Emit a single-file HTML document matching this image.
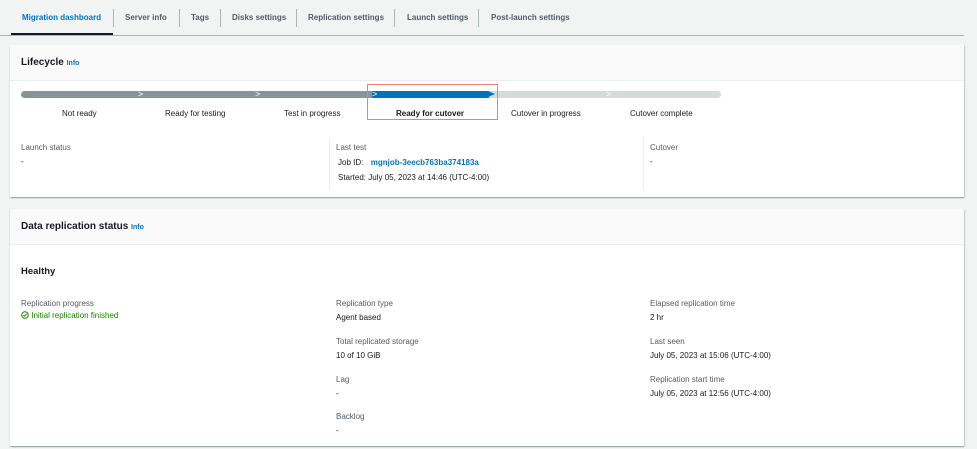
<!DOCTYPE html>
<html><head><style>
*{margin:0;padding:0;box-sizing:border-box}
body{width:977px;height:449px;background:#f2f3f3;font-family:"Liberation Sans",sans-serif;color:#16191f;position:relative;overflow:hidden;font-size:8px}
.a{position:absolute;white-space:nowrap}
.tab{position:absolute;top:13px;font-size:8px;font-weight:bold;color:#545b64}
.sep{position:absolute;top:9px;width:1px;height:18px;background:#aab7b8}
.card{position:absolute;left:10px;width:954px;background:#fff;box-shadow:0 1px 1px rgba(0,28,36,.3),1px 1px 1px rgba(0,28,36,.15)}
.hd{position:absolute;left:0;top:0;width:100%;height:36px;background:#fafafa;border-bottom:1px solid #eaeded}
.h{font-size:10px;font-weight:bold}
.info{font-size:7px;font-weight:bold;color:#0073bb}
.lbl{color:#545b64;font-size:8px}
.val{font-size:8px;color:#16191f}
.seg{position:absolute;top:91px;height:7px}
.chev{position:absolute;top:89px;font-size:9px;color:#fff;line-height:10px}
</style></head><body>
<div class="tab" style="left:22px;color:#0073bb">Migration dashboard</div>
<div style="position:absolute;left:11px;top:33px;width:102px;height:2px;background:#16191f"></div>
<div class="sep" style="left:113px"></div>
<div class="tab" style="left:125px">Server info</div>
<div class="sep" style="left:179px"></div>
<div class="tab" style="left:191px">Tags</div>
<div class="sep" style="left:220px"></div>
<div class="tab" style="left:232px">Disks settings</div>
<div class="sep" style="left:296px"></div>
<div class="tab" style="left:308px">Replication settings</div>
<div class="sep" style="left:394px"></div>
<div class="tab" style="left:407px">Launch settings</div>
<div class="sep" style="left:478px"></div>
<div class="tab" style="left:491px">Post-launch settings</div>
<div style="position:absolute;left:0;top:35px;width:964px;height:1px;background:#aab7b8"></div>

<div class="card" style="top:45px;height:152px">
 <div class="hd"></div>
 <div class="a h" style="left:11px;top:12px">Lifecycle <span class="info">Info</span></div>
</div>
<div class="seg" style="left:21px;width:351px;background:#879596;border-radius:4px 0 0 4px"></div>
<div class="seg" style="left:372px;width:117px;background:#0073bb"></div>
<div class="seg" style="left:489px;width:232px;background:#d5dbdb;border-radius:0 4px 4px 0"></div>
<div class="chev" style="left:138px">&gt;</div>
<div class="chev" style="left:255px">&gt;</div>
<div class="chev" style="left:372px">&gt;</div>
<div style="position:absolute;left:488px;top:91px;width:0;height:0;border-top:3.5px solid transparent;border-bottom:3.5px solid transparent;border-left:7px solid #0073bb"></div>
<div class="chev" style="left:606px">&gt;</div>
<div style="position:absolute;left:367px;top:84px;width:131px;height:36px;border:1.5px solid #f0806c"></div>
<div class="a val" style="left:62px;top:109px">Not ready</div>
<div class="a val" style="left:165px;top:109px">Ready for testing</div>
<div class="a val" style="left:284px;top:109px">Test in progress</div>
<div class="a val" style="left:396px;top:109px;font-weight:bold">Ready for cutover</div>
<div class="a val" style="left:511px;top:109px">Cutover in progress</div>
<div class="a val" style="left:630px;top:109px">Cutover complete</div>
<div style="position:absolute;left:329px;top:137px;width:1px;height:53px;background:#eaeded"></div>
<div style="position:absolute;left:643px;top:137px;width:1px;height:53px;background:#eaeded"></div>
<div class="a lbl" style="left:21px;top:143px">Launch status</div>
<div class="a val" style="left:21px;top:157px">-</div>
<div class="a lbl" style="left:336px;top:143px">Last test</div>
<div class="a val" style="left:338px;top:158px">Job ID: &nbsp;<span style="color:#0073bb;font-weight:bold;margin-left:3px">mgnjob-3eecb763ba374183a</span></div>
<div class="a val" style="left:338px;top:173px">Started: July 05, 2023 at 14:46 (UTC-4:00)</div>
<div class="a lbl" style="left:650px;top:143px">Cutover</div>
<div class="a val" style="left:650px;top:157px">-</div>

<div class="card" style="top:209px;height:237px">
 <div class="hd"></div>
 <div class="a h" style="left:11px;top:12px">Data replication status <span class="info">Info</span></div>
 <div class="a h" style="left:11px;top:57px;font-size:9.5px">Healthy</div>
</div>
<div class="a lbl" style="left:21px;top:299px">Replication progress</div>
<div class="a" style="left:21px;top:311px;color:#1d8102;font-size:8px"><svg width="8" height="8" viewBox="0 0 8 8" style="vertical-align:-1px"><circle cx="4" cy="4" r="3.3" fill="none" stroke="#1d8102" stroke-width="1"/><path d="M2.3 4.1l1.2 1.1 2.2-2.3" fill="none" stroke="#1d8102" stroke-width="1"/></svg> Initial replication finished</div>
<div class="a lbl" style="left:336px;top:299px">Replication type</div>
<div class="a val" style="left:336px;top:313px">Agent based</div>
<div class="a lbl" style="left:336px;top:337px">Total replicated storage</div>
<div class="a val" style="left:336px;top:351px">10 of 10 GiB</div>
<div class="a lbl" style="left:336px;top:375px">Lag</div>
<div class="a val" style="left:336px;top:389px">-</div>
<div class="a lbl" style="left:336px;top:412px">Backlog</div>
<div class="a val" style="left:336px;top:426px">-</div>
<div class="a lbl" style="left:650px;top:299px">Elapsed replication time</div>
<div class="a val" style="left:650px;top:313px">2 hr</div>
<div class="a lbl" style="left:650px;top:337px">Last seen</div>
<div class="a val" style="left:650px;top:351px">July 05, 2023 at 15:06 (UTC-4:00)</div>
<div class="a lbl" style="left:650px;top:375px">Replication start time</div>
<div class="a val" style="left:650px;top:389px">July 05, 2023 at 12:56 (UTC-4:00)</div>
</body></html>
